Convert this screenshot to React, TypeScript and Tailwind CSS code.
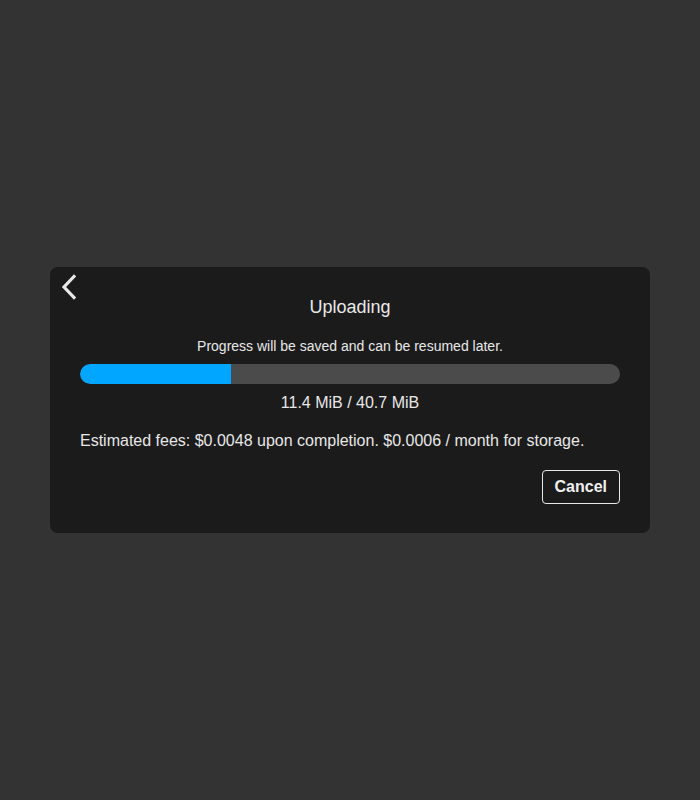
import React from "react";

export default function App() {
  const uploaded = 11.4;
  const total = 40.7;
  const pct = (uploaded / total) * 100;
  return (
    <div
      className="min-h-screen w-full bg-[#333333] flex items-center justify-center"
      style={{ fontFamily: '"Liberation Sans", Arial, sans-serif' }}
    >
      <div className="relative w-[600px] rounded-lg bg-[#1b1b1b] px-[30px] pt-[26px] pb-[29px] text-[#e8e8e8]">
        <button className="absolute left-[8px] top-[6px] w-[20px] h-[28px] flex items-center justify-center">
          <svg width="16" height="26" viewBox="0 0 16 26" fill="none">
            <path d="M14 2.5 L4 13 L14 23.5" stroke="#e8e8e8" strokeWidth="3.2" strokeLinecap="square" strokeLinejoin="miter" />
          </svg>
        </button>
        <div className="text-center text-[18px] leading-[28px]">Uploading</div>
        <div className="mt-[15px] text-center text-[14px] leading-[20px]">
          Progress will be saved and can be resumed later.
        </div>
        <div className="mt-[8px] h-[20px] w-full rounded-full bg-[#4b4b4b] overflow-hidden">
          <div className="h-full rounded-l-full bg-[#00a6ff]" style={{ width: `${pct}%` }} />
        </div>
        <div className="mt-[7px] text-center text-[16px] leading-[24px]">11.4 MiB / 40.7 MiB</div>
        <div className="mt-[14px] text-[16px] leading-[24px]">
          Estimated fees: $0.0048 upon completion. $0.0006 / month for storage.
        </div>
        <div className="mt-[17px] flex justify-end">
          <button className="h-[34px] px-[12px] rounded-[4px] border border-[#e8e8e8] text-[16px] font-bold text-[#f0f0f0]">
            Cancel
          </button>
        </div>
      </div>
    </div>
  );
}
